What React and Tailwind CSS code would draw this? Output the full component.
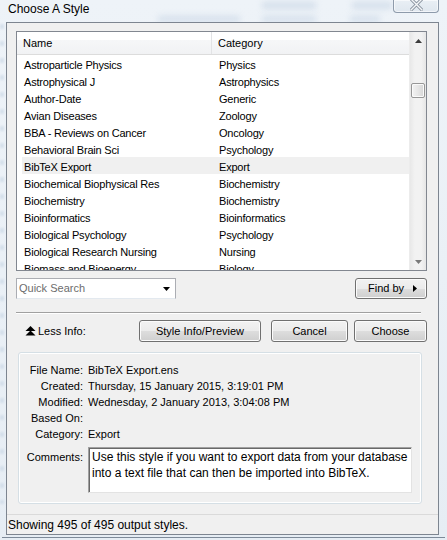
import React from "react";

const rows = [
  ["Astroparticle Physics", "Physics"],
  ["Astrophysical J", "Astrophysics"],
  ["Author-Date", "Generic"],
  ["Avian Diseases", "Zoology"],
  ["BBA - Reviews on Cancer", "Oncology"],
  ["Behavioral Brain Sci", "Psychology"],
  ["BibTeX Export", "Export"],
  ["Biochemical Biophysical Res", "Biochemistry"],
  ["Biochemistry", "Biochemistry"],
  ["Bioinformatics", "Bioinformatics"],
  ["Biological Psychology", "Psychology"],
  ["Biological Research Nursing", "Nursing"],
  ["Biomass and Bioenergy", "Biology"],
];

const btn =
  "flex items-center justify-center h-[22px] rounded-[3px] border border-[#707070] shadow-[inset_0_0_0_1px_#fbfbfb] bg-[linear-gradient(to_bottom,#f2f2f2_0%,#ebebeb_50%,#dddddd_51%,#cfcfcf_100%)] text-black";

function InfoRow({ label, value }) {
  return (
    <div className="flex h-[16px] items-center leading-[16px]">
      <div className="w-[64px] text-right">{label}</div>
      <div className="pl-[5px]">{value}</div>
    </div>
  );
}

export default function App() {
  return (
    <div className="relative w-[447px] h-[540px] overflow-hidden bg-[linear-gradient(to_bottom,#eef3f8,#e6edf4)] font-['Liberation_Sans',Arial,sans-serif] text-[11px] text-black">
      {/* blurred desktop content behind the glass frame */}
      <div className="absolute left-[262px] top-[2px] w-[54px] h-[7px] bg-[#c3d2e3] blur-[3px] opacity-60" />
      <div className="absolute left-[352px] top-[2px] w-[40px] h-[7px] bg-[#c3d2e3] blur-[3px] opacity-60" />
      <div className="absolute left-[158px] top-[16px] w-[82px] h-[6px] bg-[#c3d2e3] blur-[3px] opacity-60" />
      <div className="absolute left-[262px] top-[16px] w-[54px] h-[6px] bg-[#c3d2e3] blur-[3px] opacity-60" />
      <div className="absolute left-[350px] top-[16px] w-[30px] h-[6px] bg-[#c3d2e3] blur-[3px] opacity-60" />
      <div className="absolute left-0 top-[24px] w-[4px] h-[480px] bg-[repeating-linear-gradient(to_bottom,#c0cfe0_0px,#c0cfe0_5px,transparent_5px,transparent_17px)] blur-[1px] opacity-50" />

      {/* close button */}
      <div className="absolute left-[393px] top-0 w-[46px] h-[13px] rounded-b-[4px] border border-t-0 border-[#8e9bab] bg-[linear-gradient(to_bottom,#e9eff5,#dfe7ef)] shadow-[inset_0_0_0_1px_rgba(255,255,255,0.6)] flex items-end justify-center">
        <svg width="13" height="11" viewBox="0 0 13 11" className="mb-[1px]">
          <path d="M1 -1 L12 10 M12 -1 L1 10" stroke="#8a94a0" strokeWidth="3.2" strokeLinecap="square" />
          <path d="M1 -1 L12 10 M12 -1 L1 10" stroke="#f4f6f8" strokeWidth="1.4" strokeLinecap="square" />
        </svg>
      </div>

      {/* title */}
      <div className="h-[22px] pl-[8px] pt-[1px] text-[12px] leading-[16px] text-black relative">
        Choose A Style
      </div>

      {/* client area */}
      <div className="relative ml-[6px] w-[433px] h-[513px] border border-[#7d8590] bg-[#f0f0f0] flex flex-col">
        {/* list view */}
        <div className="mt-[8px] ml-[9px] w-[411px] h-[240px] border border-[#828790] bg-white flex">
          <div className="flex-1 flex flex-col overflow-hidden">
            <div className="h-[23px] shrink-0 flex border-b border-[#dcdcdc] bg-[linear-gradient(to_bottom,#ffffff_0%,#ffffff_35%,#f6f7f8_36%,#f1f2f4_100%)]">
              <div className="w-[195px] pl-[6px] pt-[1px] flex items-center border-r border-[#e2e3e5]">Name</div>
              <div className="pl-[6px] pt-[1px] flex items-center">Category</div>
            </div>
            {rows.map(([n, c]) => (
              <div
                key={n}
                className={
                  "shrink-0 h-[17px] ml-[5px] pt-[3px] flex items-center tracking-[-0.2px] " +
                  (n === "BibTeX Export" ? "bg-[#f0f0f0]" : "")
                }
              >
                <div className="w-[190px] pl-[2px] whitespace-nowrap">{n}</div>
                <div className="pl-[7px] whitespace-nowrap">{c}</div>
              </div>
            ))}
          </div>
          {/* scrollbar */}
          <div className="w-[17px] shrink-0 flex flex-col bg-[linear-gradient(to_right,#e8e8e8,#f2f2f2_30%,#f2f2f2_70%,#e6e6e6)] border-l border-[#ececec]">
            <div className="h-[17px] flex items-center justify-center">
              <svg width="7" height="4" viewBox="0 0 7 4"><path d="M0 4 L3.5 0 L7 4 Z" fill="#3c3c3c" /></svg>
            </div>
            <div className="mt-[34px] mx-[1px] h-[15px] rounded-[2px] border border-[#979797] bg-[linear-gradient(to_right,#f3f3f3,#e6e6e6_50%,#d6d6d6)] shadow-[inset_0_0_0_1px_#fafafa]" />
            <div className="flex-1" />
            <div className="h-[17px] flex items-center justify-center">
              <svg width="7" height="4" viewBox="0 0 7 4"><path d="M0 0 L3.5 4 L7 0 Z" fill="#7a7a7a" /></svg>
            </div>
          </div>
        </div>

        {/* search row */}
        <div className="mt-[7px] ml-[9px] w-[411px] flex justify-between">
          <div className="w-[160px] h-[21px] border border-[#abadb3] border-b-[#e3e9ef] bg-white flex items-center pl-[2px] pr-[5px]">
            <span className="flex-1 text-[#6d6d6d]">Quick Search</span>
            <svg width="7" height="4" viewBox="0 0 7 4"><path d="M0 0 L3.5 4 L7 0 Z" fill="#000" /></svg>
          </div>
          <div className={btn + " w-[72px] !h-[21px] !justify-start pl-[12px]"}>
            <span className="flex-1">Find by</span>
            <svg width="4" height="7" viewBox="0 0 4 7" className="mr-[9px]"><path d="M0 0 L4 3.5 L0 7 Z" fill="#000" /></svg>
          </div>
        </div>

        {/* separator */}
        <div className="mt-[13px] ml-[9px] w-[405px] h-[2px] border-t border-[#a0a0a0] border-b border-b-white" />

        {/* button row */}
        <div className="mt-[6px] h-[22px] flex items-center">
          <div className="ml-[18px] w-[114px] flex items-center gap-[2px]">
            <svg width="11" height="10" viewBox="0 0 11 10">
              <path d="M0.5 5 L5.5 0 L10.5 5 Z" fill="#000" />
              <path d="M0.5 9.5 L5.5 4.5 L10.5 9.5 Z" fill="#000" />
            </svg>
            <span>Less Info:</span>
          </div>
          <div className={btn + " w-[122px]"}>Style Info/Preview</div>
          <div className={btn + " ml-[10px] w-[77px]"}>Cancel</div>
          <div className={btn + " ml-[6px] w-[73px]"}>Choose</div>
        </div>

        {/* info group box */}
        <div className="mt-[10px] ml-[11px] w-[404px] h-[152px] rounded-[3px] border border-[#d5dfe5] shadow-[inset_0_0_0_1px_#ffffff] pt-[9px]">
          <InfoRow label="File Name:" value="BibTeX Export.ens" />
          <InfoRow label="Created:" value="Thursday, 15 January 2015, 3:19:01 PM" />
          <InfoRow label="Modified:" value="Wednesday, 2 January 2013, 3:04:08 PM" />
          <InfoRow label="Based On:" value="" />
          <InfoRow label="Category:" value="Export" />
          <div className="mt-[5px] flex">
            <div className="w-[64px] text-right pt-[2px] leading-[16px]">Comments:</div>
            <div className="ml-[5px] w-[324px] h-[46px] bg-white border border-t-[#a0a0a0] border-l-[#a0a0a0] border-r-[#e3e3e3] border-b-[#e3e3e3] shadow-[inset_1px_1px_0_#696969] pl-[3px] pt-[1px] leading-[16px] text-[12px]">
              Use this style if you want to export data from your database into a text file that can then be imported into BibTeX.
            </div>
          </div>
        </div>

        {/* status bar */}
        <div className="mt-auto h-[20px] border-t border-[#dadada] bg-[#f0f0f0] flex items-center pl-[1px] text-[12px]">
          Showing 495 of 495 output styles.
        </div>
      </div>
      <div className="mt-[2px] mx-[2px] h-px bg-[#7d8a99]" />
    </div>
  );
}
